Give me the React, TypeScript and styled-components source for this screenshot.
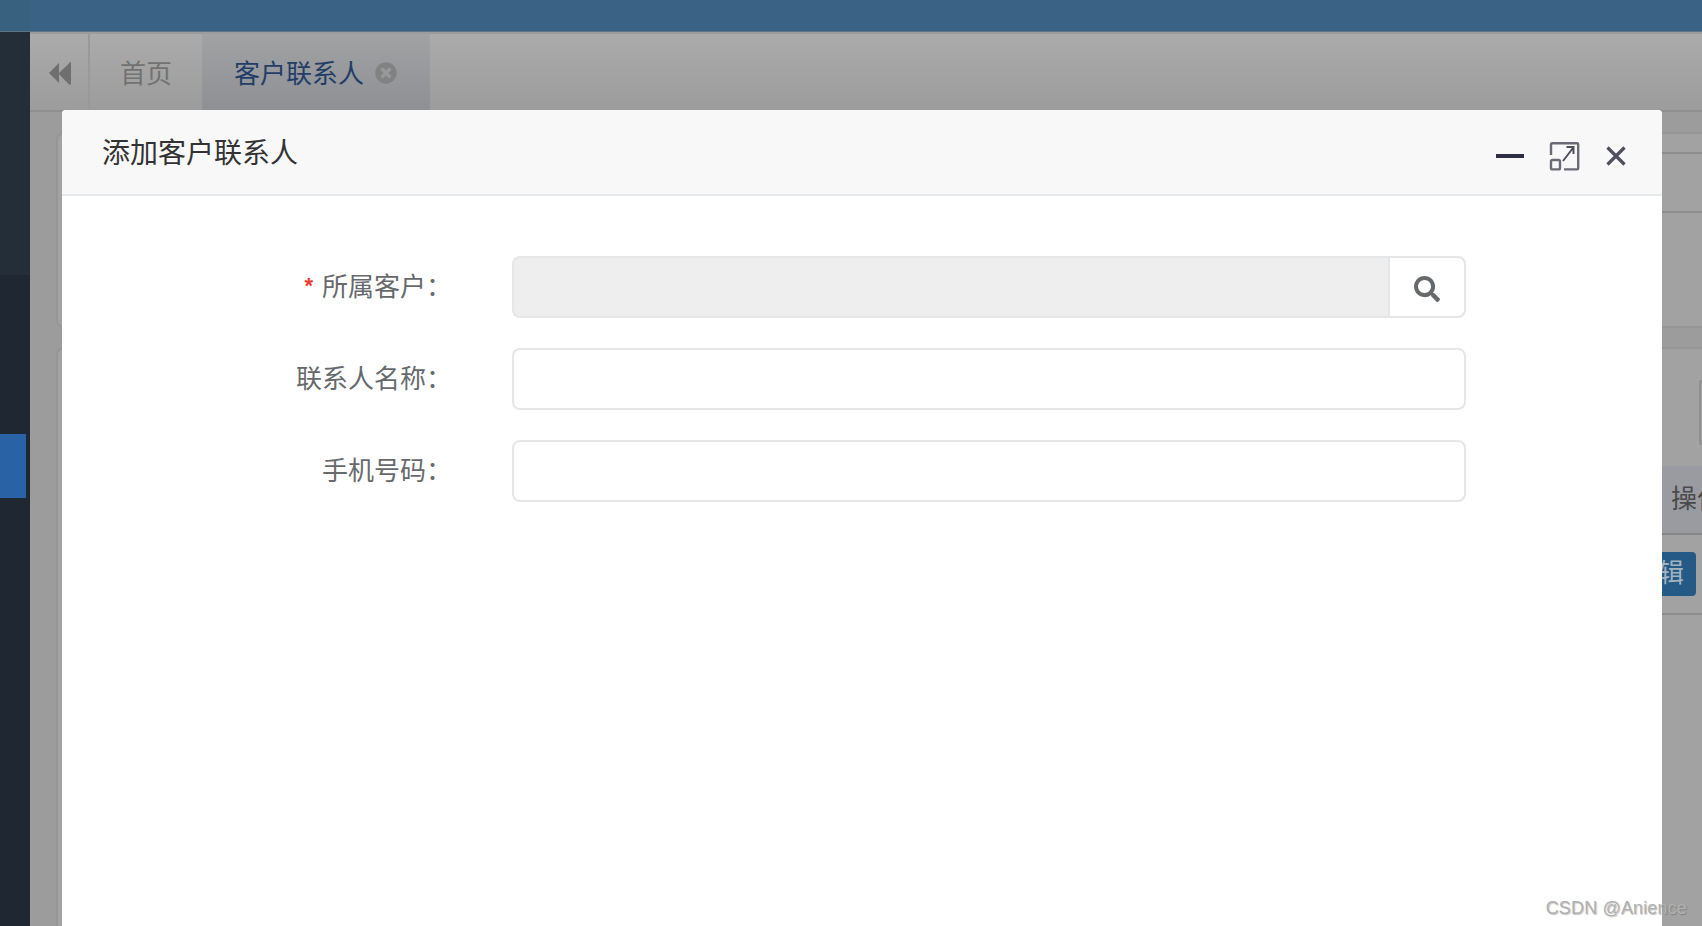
import React from "react";
import styled, { createGlobalStyle } from "styled-components";
import { FaSearch, FaTimesCircle } from "react-icons/fa";

const CJK = `"Liberation Sans", "Noto Sans CJK SC", sans-serif`;

const GlobalStyle = createGlobalStyle`
  html, body {
    margin: 0;
    padding: 0;
    height: 100%;
    overflow: hidden;
    background: #a0a0a0;
    font-family: ${CJK};
  }
  * {
    box-sizing: border-box;
  }
`;

const Page = styled.div`
  position: relative;
  width: 1702px;
  height: 926px;
  overflow: hidden;
  display: flex;
  flex-direction: column;
`;

const TopBar = styled.header`
  flex: 0 0 32px;
  background: linear-gradient(90deg, #37617f 0, #37617f 30px, #3a6285 30px, #3a6285 100%);
  border-bottom: 1px solid #5d7487;
`;

const Body = styled.div`
  flex: 1;
  display: flex;
  min-height: 0;
`;

const Sidebar = styled.aside`
  flex: 0 0 30px;
  background: #1f2832;
`;

const SideHeader = styled.div`
  height: 243px;
  margin-bottom: 159px;
  background: #232e39;
`;

const SideItem = styled.div`
  width: 26px;
  height: 64px;
  background: #2a62a6;
`;

const Main = styled.main`
  flex: 1;
  display: flex;
  flex-direction: column;
  background: #9c9c9c;
`;

const TabBar = styled.nav`
  flex: 0 0 78px;
  margin-top: 2px;
  display: flex;
  background: linear-gradient(180deg, #ababab 0, #9c9c9c 100%);
  border-bottom: 2px solid #8f8f8f;
`;

const TabToggle = styled.div`
  width: 60px;
  display: flex;
  align-items: center;
  justify-content: center;
  border-right: 2px solid #999;
  padding: 2px 0 0 2px;
`;

const Tab = styled.div<{ $active?: boolean }>`
  height: 76px;
  display: flex;
  align-items: center;
  gap: 11px;
  padding: 0 ${({ $active }) => ($active ? "33px" : "30px")} 2px
    ${({ $active }) => ($active ? "32px" : "30px")};
  font-size: 26px;
  color: ${({ $active }) => ($active ? "#223e68" : "#727272")};
  background: ${({ $active }) =>
    $active ? "linear-gradient(180deg, #a1a2a4 0, #8f9093 100%)" : "transparent"};
`;

const TabClose = styled(FaTimesCircle)`
  font-size: 22px;
  margin-top: 4px;
  color: #828282;
`;

const Content = styled.div`
  flex: 1;
  display: flex;
  flex-direction: column;
  gap: 19px;
  padding: 20px 0 0 26px;
`;

const SearchCard = styled.section`
  height: 196px;
  background: #a2a2a2;
  border: 2px solid #969696;
  border-right: 0;
  border-radius: 8px 0 0 8px;
  display: flex;
  flex-direction: column;
`;

const CardHead = styled.div`
  height: 20px;
  margin-left: 20px;
  border-bottom: 2px solid #8d8d8d;
`;

const CardRule = styled.div`
  height: 59px;
  margin-left: 20px;
  border-bottom: 2px solid #8d8d8d;
`;

const TableCard = styled.section`
  flex: 1;
  background: #a2a2a2;
  border: 2px solid #969696;
  border-right: 0;
  border-bottom: 0;
  border-radius: 8px 0 0 0;
  padding-top: 31px;
  display: flex;
  flex-direction: column;
`;

const ToolButton = styled.div`
  align-self: flex-end;
  width: 3px;
  height: 65px;
  margin-bottom: 21px;
  border: 2px solid #8f8f8f;
  border-right: 0;
  border-radius: 6px 0 0 6px;
`;

const TableHead = styled.div`
  height: 69px;
  margin-left: 20px;
  background: #9a9ba0;
  border-bottom: 2px solid #868686;
  display: flex;
  justify-content: flex-end;
  align-items: center;
  padding-bottom: 6px;
  font-size: 26px;
  color: #4a4a4a;
  white-space: nowrap;
  overflow: hidden;
`;

const HeadCell = styled.span`
  width: 31px;
  flex: none;
  overflow: hidden;
`;

const TableRow = styled.div`
  height: 80px;
  margin-left: 20px;
  border-bottom: 2px solid #8d8d8d;
  padding-top: 17px;
  display: flex;
  justify-content: flex-end;
`;

const EditButton = styled.span`
  width: 80px;
  height: 44px;
  margin-right: 6px;
  background: #255a86;
  border-radius: 4px;
  color: #a3b3c0;
  font-size: 26px;
  line-height: 42px;
  white-space: nowrap;
  text-align: right;
  padding-right: 12px;
`;

const Dialog = styled.div`
  position: absolute;
  left: 62px;
  top: 110px;
  width: 1600px;
  height: 816px;
  background: #fff;
  border-radius: 4px 4px 0 0;
  display: flex;
  flex-direction: column;
`;

const DialogHeader = styled.div`
  flex: 0 0 86px;
  background: #f8f8f8;
  border-bottom: 2px solid #e7eaec;
  border-radius: 4px 4px 0 0;
  display: flex;
  justify-content: space-between;
  padding-left: 40px;
`;

const DialogTitle = styled.h4`
  margin: 0;
  height: 84px;
  font-size: 28px;
  font-weight: 400;
  line-height: 88px;
  color: #333;
`;

const DialogTools = styled.div`
  display: flex;
  align-items: center;
  gap: 24px;
  padding: 8px 34px 0 0;
`;

const Form = styled.form`
  display: flex;
  flex-direction: column;
  gap: 30px;
  padding: 60px 0 0 0;
`;

const FormRow = styled.div`
  display: flex;
  align-items: center;
  height: 62px;
`;

const Label = styled.label`
  width: 390px;
  text-align: right;
  font-size: 26px;
  color: #676a6c;
  white-space: nowrap;
  padding-bottom: 6px;
`;

const Required = styled.span`
  color: #ed3b2e;
  font-size: 22px;
  font-weight: 700;
  vertical-align: 3px;
  margin-right: 9px;
`;

const InputGroup = styled.div`
  margin-left: 60px;
  width: 954px;
  height: 62px;
  display: flex;
`;

const TextInput = styled.input`
  flex: 1;
  min-width: 0;
  height: 100%;
  border: 2px solid #e5e6e7;
  border-radius: 8px;
  background: #fff;
  outline: none;
  &:disabled {
    background: #eee;
    border-radius: 8px 0 0 8px;
    border-right: 0;
  }
`;

const AddonButton = styled.button`
  width: 78px;
  height: 100%;
  border: 2px solid #e5e6e7;
  border-radius: 0 8px 8px 0;
  background: #fff;
  color: #676a6c;
  font-size: 26px;
  display: flex;
  align-items: center;
  justify-content: center;
  padding: 3px 0 0;
`;

const Watermark = styled.div`
  position: absolute;
  right: 15px;
  bottom: 7px;
  font-family: "Liberation Sans", sans-serif;
  font-size: 18px;
  letter-spacing: 0.15px;
  color: #b0b0b0;
  text-shadow: 1px 1px 1px rgba(60, 60, 60, 0.3);
`;

const BackIcon = () => (
  <svg width="24" height="24" viewBox="0 0 24 24" fill="#6f6f6f" aria-hidden="true">
    <path d="M1 12L11 2V22Z" />
    <path d="M11 12L23 0.5V23.5H20.5V23L11 13Z" />
  </svg>
);

const MinIcon = () => (
  <svg width="30" height="30" viewBox="0 0 30 30" aria-hidden="true">
    <rect x="2" y="13" width="28" height="4" fill="#2d2d44" />
  </svg>
);

const MaxIcon = () => (
  <svg width="32" height="32" viewBox="0 0 32 32" fill="none" stroke="#6b6b75" strokeWidth="2.4" aria-hidden="true">
    <path d="M3 15V4.5C3 3.8 3.6 3.3 4.2 3.3H29C29.6 3.3 30.2 3.8 30.2 4.5V28.2C30.2 28.9 29.6 29.4 29 29.4H16" />
    <rect x="3" y="20" width="9" height="9.4" rx="1.5" />
    <path d="M15 21L25 8M18.5 7H25.5V14" stroke="#4f4f5e" strokeWidth="2" />
  </svg>
);

const CloseIcon = () => (
  <svg width="24" height="24" viewBox="0 0 24 24" fill="none" stroke="#4f4f5e" strokeWidth="3.2" aria-hidden="true">
    <path d="M3.5 3.5L20.5 20.5M20.5 3.5L3.5 20.5" />
  </svg>
);

const App: React.FC = () => {
  return (
    <Page>
      <GlobalStyle />
      <TopBar />
      <Body>
        <Sidebar>
          <SideHeader />
          <SideItem />
        </Sidebar>
        <Main>
          <TabBar>
            <TabToggle>
              <BackIcon />
            </TabToggle>
            <Tab>首页</Tab>
            <Tab $active>
              客户联系人
              <TabClose />
            </Tab>
          </TabBar>
          <Content>
            <SearchCard>
              <CardHead />
              <CardRule />
            </SearchCard>
            <TableCard>
              <ToolButton />
              <TableHead>
                <HeadCell>操作</HeadCell>
              </TableHead>
              <TableRow>
                <EditButton>编辑</EditButton>
              </TableRow>
            </TableCard>
          </Content>
        </Main>
      </Body>

      <Dialog>
        <DialogHeader>
          <DialogTitle>添加客户联系人</DialogTitle>
          <DialogTools>
            <MinIcon />
            <MaxIcon />
            <CloseIcon />
          </DialogTools>
        </DialogHeader>
        <Form>
          <FormRow>
            <Label>
              <Required>*</Required>所属客户：
            </Label>
            <InputGroup>
              <TextInput disabled />
              <AddonButton type="button">
                <FaSearch />
              </AddonButton>
            </InputGroup>
          </FormRow>
          <FormRow>
            <Label>联系人名称：</Label>
            <InputGroup>
              <TextInput />
            </InputGroup>
          </FormRow>
          <FormRow>
            <Label>手机号码：</Label>
            <InputGroup>
              <TextInput />
            </InputGroup>
          </FormRow>
        </Form>
      </Dialog>
      <Watermark>CSDN @Anience</Watermark>
    </Page>
  );
};

export default App;
